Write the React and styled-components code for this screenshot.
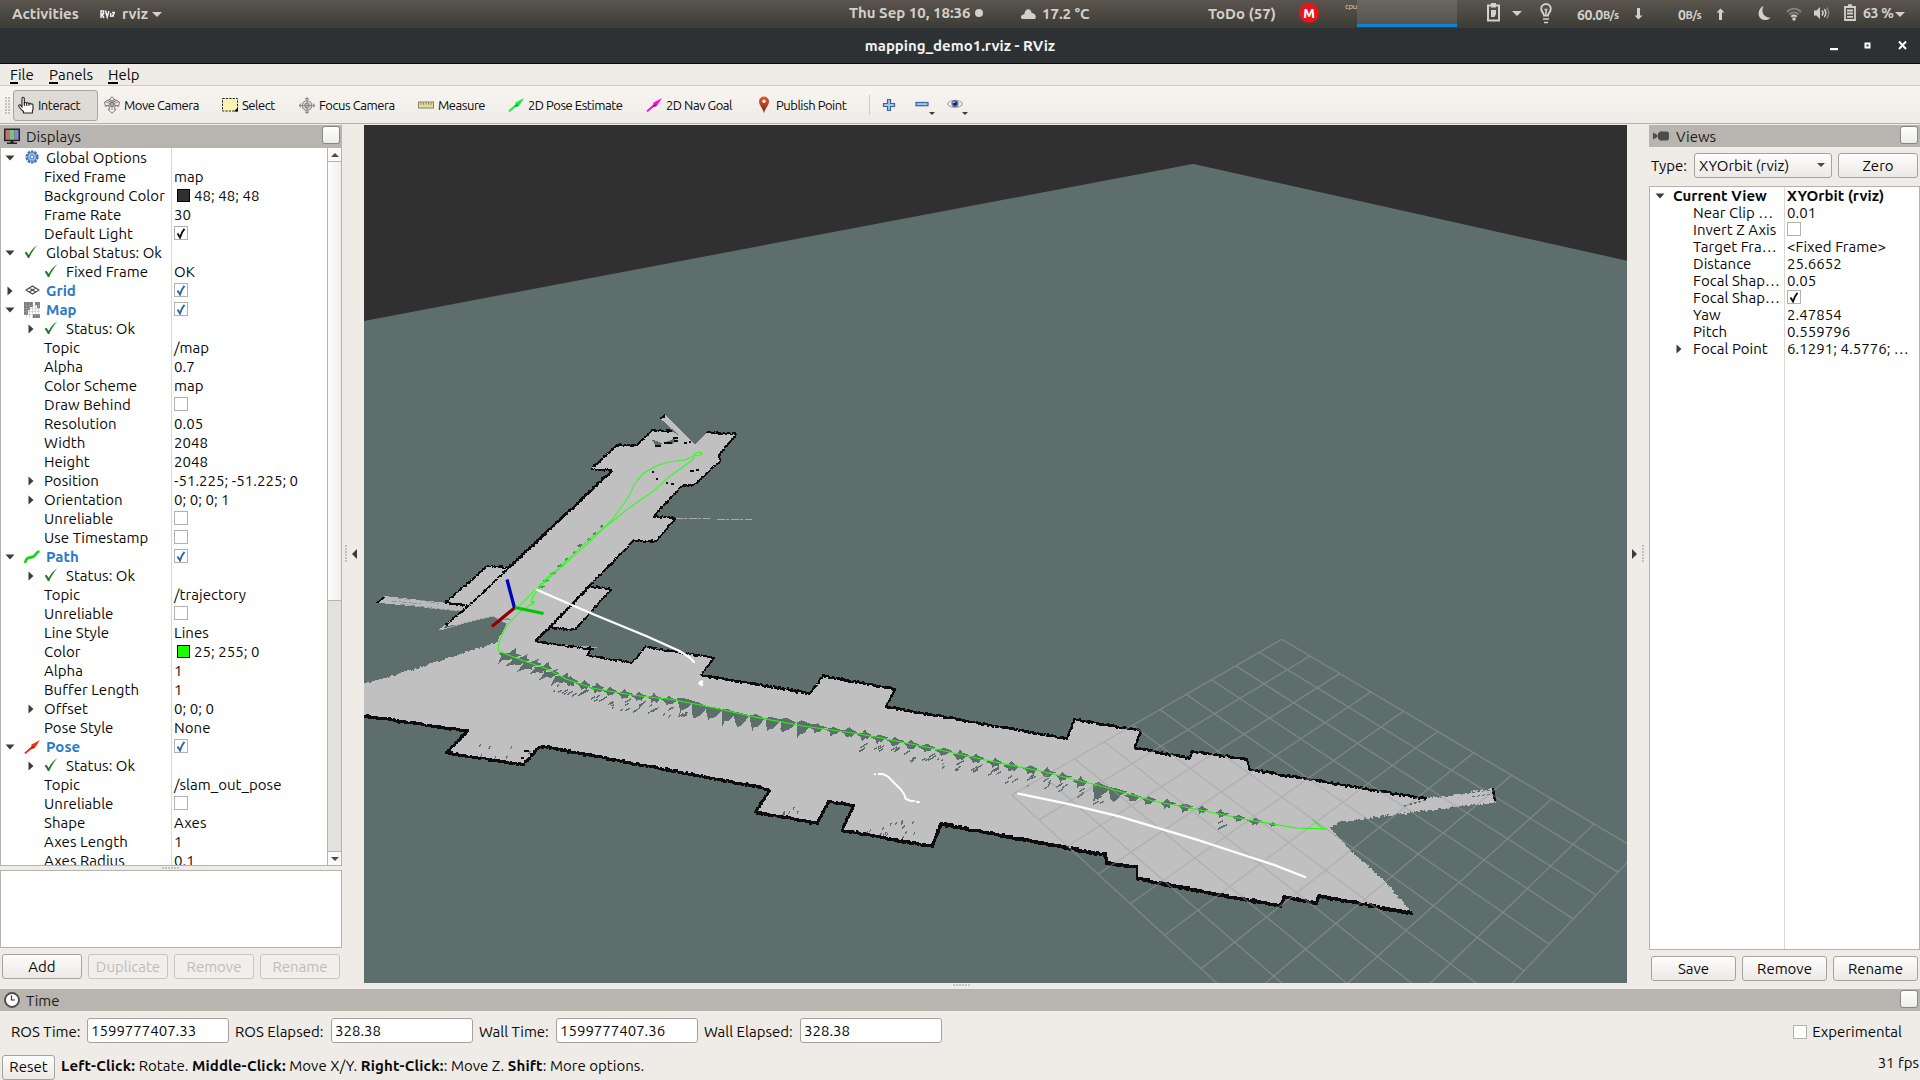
import React from 'react';
import styled, { createGlobalStyle, css } from 'styled-components';

const Global = createGlobalStyle`
  * { box-sizing: border-box; }
  body { margin: 0; background: #efebe7; overflow: hidden; }
  svg { display: block; flex: none; }
`;

const Desktop = styled.div`
  width: 1920px; height: 1080px; display: flex; flex-direction: column;
  background: #efebe7; color: #0a0a0a;
  font: 15px/19px Ubuntu, "Noto Sans", sans-serif; white-space: pre;
`;

/* ---------- desktop bar ---------- */
const TopBar = styled.header`
  height: 28px; padding-left: 12px; display: flex; align-items: center; flex: none;
  background: linear-gradient(#5a564e, #3d3b36); color: #d3d0ca;
  font-weight: 600; font-size: 15px; font-family: Ubuntu, "Open Sans", sans-serif;
`;
const Slot = styled.div`
  width: ${p => p.$w}px; flex: none; display: flex; align-items: center; height: 28px; padding-bottom: ${p => p.$up || 0}px;
  ${p => p.$sm && css`font-size: 14px; letter-spacing: -0.3px; padding-top: 2px; small { font-size: 11px; letter-spacing: -0.2px; padding-top: 1px; }`}
`;
const Dot = styled.i`width: 8px; height: 8px; border-radius: 50%; background: #d3d0ca; margin-top: -2px;`;
const Mega = styled.b`
  width: 20px; height: 20px; border-radius: 50%; background: #e8141b; color: #fff; margin-top: -2px;
  font-size: 13px; line-height: 20px; text-align: center;
`;
const Cpu = styled.span`font-size: 8px; line-height: 10px; font-weight: 400; margin-top: -15px; letter-spacing: -0.3px;`;
const Graph = styled.div`width: 100px; height: 27px; align-self: flex-start; background: linear-gradient(#6a6761, #56544e); border-bottom: 3px solid #0a84d8;`;
const Caret = styled.i`
  width: 0; height: 0; border: ${p => p.$s || 5}px solid transparent; border-bottom: 0;
  border-top: ${p => (p.$s || 5) + 0.5}px solid ${p => p.$c || '#d3d0ca'};
`;

const TitleBar = styled.div`
  height: 36px; flex: none; background: #2d3134; border-bottom: 1.5px solid #08090a; color: #f2f1ef;
  display: grid; grid-template-columns: 1fr auto 1fr; align-items: center;
  font-weight: 700; font-size: 15px;
`;
const WinBtns = styled.div`justify-self: end; padding-right: 9px; display: flex; gap: 18px;`;

/* ---------- menus and tools ---------- */
const MenuBar = styled.nav`
  height: 22px; flex: none; display: flex; padding-left: 10px; align-items: center; border-bottom: 1px solid #cfcbc6;
  u { text-decoration: none; border-bottom: 2px solid #000; line-height: 15px; display: inline-block; }
`;
const MenuItem = styled.span`width: ${p => p.$w}px;`;
const ToolBar = styled.div`
  height: 39px; flex: none; display: flex; align-items: center; padding: 0 0 1px 5px;
  background: linear-gradient(#f8f5f1 0, #efebe6 37px, #b3afaa 37px, #b3afaa 38px, #efebe7 38px);
  font-size: 13px; letter-spacing: -0.46px;
`;
const Tool = styled.div`
  width: ${p => p.$w}px; height: 31px; display: flex; align-items: center; gap: 4px; flex: none;
  ${p => p.$on && css`background: #dedad6; border: 1px solid #a9a5a1; border-radius: 3px; padding-left: 4px; margin: 0 6px 0 3px;`}
`;
const Grip = styled.i`
  width: ${p => p.$w}px; height: ${p => p.$h}px; flex: none;
  background: radial-gradient(circle at 1px 1px, #c4c0bb 0.7px, transparent 1px) 0 0 / 3px 3px;
`;
const ToolSep = styled.i`width: 1px; height: 20px; background: #cdc9c4; margin-right: 11px;`;
const DropTool = styled.div`width: ${p => p.$w}px; display: flex; ${Caret} { margin: 16px 0 0 -1px; }`;

/* ---------- panels ---------- */
const Main = styled.main`display: grid; grid-template-columns: 342px 22px 1263px 22px 271px; height: 864px; flex: none;`;
const Column = styled.section`display: flex; flex-direction: column; min-width: 0;`;
const PanelHead = styled.div`
  height: ${p => p.$h || 22}px; flex: none; background: #b8b4b0; display: flex; align-items: center;
  padding: 0 2px 0 4px; gap: 6px; color: #1b1b1b;
`;
const FloatBtn = styled.button`
  width: 18px; height: 18px; padding: 0; margin: -3px 0 0 auto; background: linear-gradient(#fff, #ececea);
  border: 1px solid #8b8784; border-radius: 3px;
`;
const TreeBox = styled.div`
  height: ${p => p.$h}px; flex: none; display: flex; background: #fff; border: 1px solid #b6b3af;
  border-top-width: ${p => p.$top ?? 1}px; overflow: hidden;
`;
const Rows = styled.div`flex: 1; display: flex; flex-direction: column; overflow: hidden; letter-spacing: 0.04px;`;
const Row = styled.div`display: flex; height: ${p => p.$h}px; flex: none; font-weight: ${p => (p.$bold ? 700 : 400)}; line-height: ${p => p.$h}px;`;
const Name = styled.div`
  width: ${p => p.$w}px; flex: none; display: flex; align-items: center; border-right: 1px solid #d9d9d9; overflow: hidden;
  ${p => p.$blue && css`color: #2a7ac7; font-weight: 700;`}
`;
const Filler = styled.div`flex: 1; width: ${p => p.$w}px; border-right: 1px solid #d9d9d9;`;
const Track = styled.div`flex: 1;`;
const Value = styled.div`display: flex; align-items: center; padding-left: 2px;`;
const Indent = styled.i`width: ${p => p.$w}px; height: 100%; flex: none; display: flex; align-items: center; padding-left: ${p => p.$a}px;`;
const IconCell = styled.i`width: 22px; flex: none; display: flex;`;
const Swatch = styled.i`width: 13px; height: 13px; border: 1px solid #000; background: ${p => p.$c}; margin: 0 4px 0 3px;`;
const Box = styled.i`
  width: 14px; height: 14px; flex: none; background: #fff; border: 1px solid #b4b1ad; display: flex; align-items: center; justify-content: center;
  margin-top: ${p => p.$mt || 0}px;
`;
const ScrollBar = styled.div`width: 14px; border-left: 1px solid #b6b3af; display: flex; flex-direction: column; background: #e3e1de;`;
const ScrollEnd = styled.div`height: 14px; background: #faf9f8; display: flex; align-items: center; justify-content: center; border: solid #b6b3af; border-width: ${p => (p.$up ? '0 0 1px' : '1px 0 0')};`;
const Thumb = styled.div`height: 439px; background: linear-gradient(90deg, #fdfdfc, #f0efed); border-bottom: 1px solid #b6b3af;`;
const UpCaret = styled(Caret)`transform: rotate(180deg);`;
const SplitH = styled.div`height: 4px; flex: none; display: flex; align-items: center; justify-content: center;`;
const HelpBox = styled.div`height: 78px; flex: none; background: #fff; border: 1px solid #b6b3af;`;
const Buttons = styled.div`display: flex; gap: 6px; padding: 6px 2px 0;`;
const Button = styled.button`
  flex: ${p => (p.$w ? 'none' : 1)}; width: ${p => (p.$w ? p.$w + 'px' : 'auto')}; height: 25px; padding: 0; border: 1px solid ${p => (p.disabled ? '#c9c5c1' : '#a6a29e')};
  border-radius: 3px; background: ${p => (p.disabled ? '#f1eeeb' : 'linear-gradient(#fdfdfd, #ebe9e6)')};
  color: ${p => (p.disabled ? '#bfbcb9' : '#0a0a0a')}; font: inherit; line-height: 22px;
`;
const Splitter = styled.div`display: flex; align-items: center; padding-bottom: 7px; gap: 5px; padding-left: ${p => p.$pl}px;`;
const Side = styled.i`
  width: 0; height: 0; border: 5px solid transparent; border-${p => (p.$left ? 'left' : 'right')}: 0;
  border-${p => (p.$left ? 'right' : 'left')}: 5px solid #3c3c3c;
`;
const View = styled.section`display: flex; flex-direction: column; ${Grip} { margin: 1px 0 0 589px; }`;

const TypeRow = styled.div`display: flex; align-items: center; padding: 6px 2px 8px; height: 39px; flex: none;`;
const Combo = styled.div`
  width: 138px; height: 25px; border: 1px solid #a6a29e; border-radius: 3px; background: linear-gradient(#fdfdfd, #ebe9e6);
  display: flex; align-items: center; justify-content: space-between; padding: 0 6px 1px 4px; margin: 0 6px 0 auto;
`;

/* ---------- time panel and status ---------- */
const TimeRow = styled.div`height: 43px; flex: none; display: flex; align-items: center; padding: 0 18px 4px 11px;`;
const Field = styled.label`width: ${p => p.$w}px; display: flex; align-items: center; justify-content: space-between; margin-right: 6px; padding-top: 1px;`;
const Input = styled.span`width: 142px; height: 25px; border: 1px solid #a6a29e; border-radius: 3px; background: #fff; padding-left: 3px; line-height: 23px; margin-top: -1px;`;
const Check = styled.label`margin-left: auto; display: flex; align-items: center; gap: 5px; padding-top: 2px;`;
const Status = styled.footer`height: 26px; flex: none; display: flex; align-items: center; padding-left: 2px; gap: 6px;`;
const Hint = styled.span`margin-top: -3px; letter-spacing: 0.03px; b { letter-spacing: 0.17px; }`;
const Fps = styled.span`margin: -9px 1px 0 auto;`;

/* ---------- icons ---------- */
const Arrow = ({ open }) => (
  <svg width="10" height="10" viewBox="0 0 10 10" fill="#3c3c3c">
    {open ? <path d="M0.5 2.500h9L5 7.500z" /> : <path d="M2.5 .5v9L7.500 5z" />}
  </svg>
);
const Ok = () => (
  <svg width="14" height="15" viewBox="0 0 14 15">
    <path d="M.5 7.800l2-1 2.200 3.200C6.500 6 9.500 2.500 13.300.2 9.800 4 7 8.500 5.200 13H3.800C3 11 2 9.300.5 7.800z" fill="#1d7a22" />
  </svg>
);
const Tick = ({ c }) => (
  <svg width="10" height="11" viewBox="0 0 10 11"><path d="M1.500 5.500l2.500 4C5 6 6.500 3 8.500.8" fill="none" stroke={c} strokeWidth="1.900" /></svg>
);
const CheckBox = ({ v }) => <Box $mt={-1}>{v && <Tick c={v === 'blue' ? '#2a68ad' : '#111'} />}</Box>;

const PoseArrow = ({ c, d }) => (
  <svg width="16" height="16" viewBox="0 0 16 16">
    <path d="M.3 13.800L7.500 7.200l-.3-1.400L16 1l-5.200 7.900-1.500-.2L1.500 15z" fill={c} />
    <path d="M8 7.500l2.800.8-1.600 1.500-2.200-.6z" fill={d} />
  </svg>
);
const icons = {
  gear: (
    <svg width="16" height="16" viewBox="0 0 16 16">
      <circle cx="8" cy="7" r="5.400" fill="#8fb4e0" stroke="#3f72b5" strokeWidth="2.400" strokeDasharray="2.400 1" />
      <circle cx="8" cy="7" r="4.200" fill="#a5c4ea" stroke="#5687c6" />
      <circle cx="8" cy="7" r="1.900" fill="#e8f0fa" stroke="#3f72b5" />
    </svg>
  ),
  ok: <Ok />,
  grid: (
    <svg width="16" height="16" viewBox="0 0 16 16" fill="none" stroke="#4a4a4a" strokeWidth="1.100">
      <path d="M2 7l6.500-4L15 7l-6.500 4zM5.200 5l6.600 4M11.800 5L5.200 9" />
    </svg>
  ),
  map: (
    <svg width="17" height="16" viewBox="0 0 17 16">
      <path d="M0 0h9v5H6v3H4v5H0zM11 0h5v6h-3V3h-2zM9 12h7v4H9z" fill="#7d7d7d" />
      <path d="M2.500 0v16M5.500 0v16M8.500 0v16M11.500 0v16M14.500 0v16M0 3.500h16M0 6.500h16M0 9.500h16M0 12.500h16" stroke="#aaa" strokeWidth=".6" opacity=".7" />
    </svg>
  ),
  path: <svg width="16" height="16" viewBox="0 0 16 16"><path d="M1 14C3 6.500 6 9.500 9.500 7.500 12.500 6 12 2.500 15.500 2.200" fill="none" stroke="#14d214" strokeWidth="2.600" /></svg>,
  pose: <PoseArrow c="#fb2a12" d="#a0190a" />,
};

const Hand = () => (
  <svg width="16" height="18" viewBox="0 0 16 18">
    <path d="M4 11V2.500C4 .8 6.300.8 6.300 2.500V7c.5-.8 2-.8 2.300.3.600-.8 2-.7 2.300.4.500-.7 2-.6 2.200.5.700-.4 1.900-.2 1.900 1V13c0 1-.6 1.500-.6 2.500V17H5.500v-1.500C3.500 13.500 1.500 12.500.7 9.800c0-1.300 1.600-1.300 2.200-.2z" fill="#fff" stroke="#222" strokeWidth="1.100" />
    <path d="M6.400 7v3M8.700 7.500v2.500M11 8v2" stroke="#222" />
  </svg>
);
const MoveCam = () => (
  <svg width="16" height="18" viewBox="0 0 16 18" fill="#f0efed" stroke="#6d6d6d" strokeWidth=".9">
    <path d="M8 .8l2.800 3H9.200V6l2.300-1V3.800L15.500 6l-1 4.500-1.500-1-2.300 1 .0 3h1.300L8 17.200l-4-3.700h1.300v-3L3 9.500l-1.500 1L.5 6l4-2.200V5l2.300 1V3.800H5.200z" />
    <path d="M2 6l12 4M14 6L2 10M8 4v10" strokeWidth=".8" /><circle cx="8" cy="8.500" r="2.200" fill="#aaa" />
  </svg>
);
const SelectIc = () => (
  <svg width="16" height="16" viewBox="0 0 16 16">
    <rect x=".5" y="1.500" width="15" height="12.500" fill="#fbf3b4" stroke="#222" strokeDasharray="2.200 1.200" />
    <path d="M16 10v4.500h-4z" fill="#111" />
  </svg>
);
const Focus = () => (
  <svg width="16" height="17" viewBox="0 0 17 17" fill="none" stroke="#8d8b89" strokeWidth="1.200">
    <circle cx="8.500" cy="8.500" r="5" fill="#e4e2df" /><circle cx="8.500" cy="8.500" r="2.400" />
    <path d="M8.500 0v17M0 8.500h17M6.500 2l2-1.700 2 1.700M6.500 15l2 1.700 2-1.700M2 6.500L.3 8.500 2 10.500M15 6.500l1.700 2-1.700 2" />
  </svg>
);
const Ruler = () => (
  <svg width="16" height="8" viewBox="0 0 16 8">
    <rect x=".5" y="1" width="15" height="6" fill="#e8dc9c" stroke="#84806e" />
    <path d="M3 1.500v2.300M5.500 1.500v2.300M8 1.500v2.300M10.500 1.500v2.300M13 1.500v2.300" stroke="#84806e" />
  </svg>
);
const Pin = () => (
  <svg width="16" height="18" viewBox="0 0 16 18">
    <defs><linearGradient id="pin" x2="0" y2="1"><stop offset="0" stopColor="#ef5430" /><stop offset="1" stopColor="#6a2e12" /></linearGradient></defs>
    <path d="M8 17.500C7.400 13 3 9.500 3 5.500a5 5 0 0110 0c0 4-4.400 7.500-5 12z" fill="url(#pin)" /><circle cx="8" cy="5.300" r="1.700" fill="#fbe9e3" />
  </svg>
);
const Plus = () => (
  <svg width="16" height="16" viewBox="0 0 16 16"><path d="M6.500 2.500h3v4h4v3h-4v4h-3v-4h-4v-3h4z" fill="#a7c3e8" stroke="#3465a4" strokeWidth="1.200" /></svg>
);
const Minus = () => (
  <svg width="16" height="16" viewBox="0 0 16 16"><rect x="2" y="6.500" width="12" height="3.200" fill="#a7c3e8" stroke="#3465a4" strokeWidth="1.200" /></svg>
);
const Eye = () => (
  <svg width="16" height="16" viewBox="0 0 16 16">
    <path d="M.5 8C3 3 13 3 15.500 8 13 12.500 3 12.500.5 8z" fill="#f4f4f4" stroke="#aaa" strokeWidth="1.200" />
    <circle cx="8" cy="7.600" r="3.700" fill="#5b74b8" /><circle cx="8" cy="7.600" r="1.900" fill="#141a30" /><circle cx="7" cy="6.500" r=".8" fill="#fff" />
  </svg>
);
const Monitor = () => (
  <svg width="16" height="17" viewBox="0 0 16 17">
    <rect x=".7" y="1.200" width="14.600" height="11.300" fill="#333" stroke="#222" strokeWidth="1.400" />
    <path d="M1.500 2H6v9.700H1.500z" fill="#c67070" /><path d="M6 2h4.500v9.700H6z" fill="#7cc080" /><path d="M10.500 2h4v9.700h-4z" fill="#8a86d0" />
    <path d="M6.500 12.500h3v2h3.500v1.500H3v-1.500h3.500z" fill="#222" />
  </svg>
);
const Camera = () => (
  <svg width="17" height="10" viewBox="0 0 17 10" fill="#4c4c4c"><path d="M0 1.500L4.500 4v2L0 8.500zM5 2.500L7 .5h7.500L16 2v6l-1.500 1.500H7L5 7.500z" /></svg>
);
const Clock = () => (
  <svg width="16" height="16" viewBox="0 0 16 16"><circle cx="8" cy="8" r="7" fill="#fff" stroke="#4e4e4e" strokeWidth="1.900" /><path d="M7.500 3.500V8H11" fill="none" stroke="#333" strokeWidth="1.200" /></svg>
);
const RvizLogo = () => (
  <svg width="15" height="11" viewBox="0 0 15 11" fill="none" stroke="#f0f0f0" strokeWidth="1.500">
    <path d="M1 9V2h2.500v3H1.500L4 9M5.500 1.500L7.200 8 9 2M10.700 4v4M12 3.500h2.500L12.500 7H14" />
  </svg>
);
const g = '#d3d0ca';
const Cloud = () => <svg width="16" height="10" viewBox="0 0 16 10" fill={g}><path d="M2 10a2.500 2.500 0 010-4c.8-.6 1.500-.5 2.300-.4C4.500-.8 11-1.200 11.500 3.700 15 4 17 8 15 10z" /></svg>;
const Clip = () => (
  <svg width="14" height="19" viewBox="0 0 14 19" fill="none" stroke={g} strokeWidth="2"><path d="M4 2.500H1V17.500h11V2.500H9" /><path d="M4 0h5v4.500H4zM4 7h5v4l-1.500 3H4z" fill={g} stroke="none" /></svg>
);
const Bulb = () => (
  <svg width="12" height="21" viewBox="0 0 12 21" fill="none" stroke={g} strokeWidth="1.900"><path d="M4 12.500C4 10 1.200 9 1.200 5.800a4.800 4.800 0 019.600 0C10.800 9 8 10 8 12.500z" /><path d="M3 16h6M4 19.500h4M6 6.500v5M4.500 6.500h3" strokeWidth="1.500" /></svg>
);
const UD = ({ up }) => (
  <svg width="9" height="12" viewBox="0 0 9 12" fill={g}>
    {up ? <path d="M3 12h3V4.500h2.500l-4-4-4 4H3z" /> : <path d="M3 0h3v7.500h2.500l-4 4-4-4H3z" />}
  </svg>
);
const Moon = () => <svg width="13" height="14" viewBox="0 0 13 14" fill={g}><path d="M5.500 0C-1.500 3-1 14 7 14c2 0 4-.8 5.500-2.300C6 12 2.500 6 5.500 0z" /></svg>;
const Wifi = () => (
  <svg width="16" height="14" viewBox="0 0 16 14" fill="none" strokeWidth="1.900"><path d="M1 5C5 .5 11 .5 15 5" stroke="#85827c" /><path d="M3.300 7.500c3-3 6.500-3 9.400 0" stroke="#85827c" /><path d="M5.300 9.700c1.800-1.600 3.600-1.600 5.400 0" stroke={g} /><circle cx="8" cy="12" r="1.700" fill={g} /></svg>
);
const Vol = () => (
  <svg width="16" height="14" viewBox="0 0 16 14" fill="none" stroke={g} strokeWidth="1.500"><path d="M0 4.500h2.500L6 1v12L2.500 9.500H0z" fill={g} stroke="none" /><path d="M8 4.500q2 2.500 0 5M10.300 3q3 4 0 8" /><path d="M12.700 1.500q4 5.500 0 11" stroke="#85827c" /></svg>
);
const Batt = () => (
  <svg width="12" height="17" viewBox="0 0 12 17" fill="none" stroke={g} strokeWidth="1.800"><path d="M1 3h10v13H1zM4 1.200h4M3 6.500h6M3 9.500h6M3 12.800h6" /></svg>
);

/* ---------- 3D scene ---------- */
/* survey sections are stored in thirds of a pixel from the section's own origin */
const sec = (ox, oy, s) => s.trim().split(/\s+/).map(p => { const [x, y] = p.split(','); return [ox + x / 3, oy + y / 3]; });
const rng = seed => () => { seed = (seed * 16807) % 2147483647; return seed / 2147483647; };
const poly = pts => 'M' + pts.map(p => p[0].toFixed(1) + ' ' + p[1].toFixed(1)).join('L');

const north = sec(360, 400, `12,853 150,815 260,778 413,730 418,705 440,672 400,648 235,690 255,675 325,618 255,608 380,498 445,503 755,212 693,206 770,135 830,135 875,90 935,93 962,110 900,55 915,45 1005,133 1040,97 1128,103 1076,165 1080,182 1000,256 965,257 880,348 945,354 888,424 820,422 687,558 752,568 643,690 568,683 525,723 690,748 680,766 815,788 855,741 1062,773 1022,825`);
const east = [...sec(360, 620, `1022,165 1350,220 1388,168`), ...sec(820, 650, `10,78 225,117 197,170 740,266 762,208 962,242 943,293 1108,325 1115,303`)];
const tip = sec(1180, 620, `35,393 200,418 208,448 740,537 800,531 938,508 945,543 670,577 480,603 445,622 500,685 610,785 693,880 415,828 408,850 312,830 300,858 0,802`);
const south = [...sec(820, 650, `950,685 950,652 860,640 855,615 362,522 335,590 65,540 100,467 25,455`), ...sec(360, 620, `1405,545 1370,610 1185,577 1228,510 1180,498 540,378 487,435 258,398 322,333 12,288`)];
const floor = poly([...north, ...east, ...tip, ...south]) + 'Z';

/* scatters small cells along a polyline, as an occupancy grid does */
const rough = (lines, seed, amp) => lines.map(([t, pts], k) => {
  const r = rng(seed + k * 37);
  let d = '';
  for (let i = 1; i < pts.length; i++) {
    const [x0, y0] = pts[i - 1], [x1, y1] = pts[i];
    const n = Math.ceil(Math.hypot(x1 - x0, y1 - y0) / 1.1);
    for (let j = 0; j < n; j++) {
      const h = t + r() * 1.6;
      d += `M${(x0 + (x1 - x0) * j / n - t / 2).toFixed(1)} ${(y0 + (y1 - y0) * j / n - h / 2 + (r() - .5) * amp).toFixed(1)}h${(t + .6).toFixed(1)}v${h.toFixed(1)}h-${(t + .6).toFixed(1)}z`;
    }
  }
  return d;
}).join('');
const wallPath = rough([
  [.8, sec(360, 400, `255,675 325,618 445,503`)], [1.6, sec(360, 400, `445,503 755,212`)],
  [1, sec(360, 400, `325,618 255,608 380,498 445,503`)], [1, sec(360, 400, `755,212 693,206 770,135 830,135 875,90 935,93`)],
  [1, sec(360, 400, `1040,97 1128,103 1076,165 1080,182 1000,256 965,257 880,348 945,354 888,424 820,422 687,558 752,568 643,690 568,683 525,723 690,748 680,766 815,788 855,741 1062,773 1022,825`)],
  [1.4, sec(360, 400, `687,558 565,685 525,723`)], [1.1, sec(360, 400, `900,55 915,45`)], [1, sec(360, 400, `50,608 75,590`)],
  [1.4, east], [1.4, tip.slice(0, 4)], [1.8, tip.slice(5, 7)], [2.2, [...tip.slice(12), ...south.slice(0, 6)]], [1.8, south.slice(5)],
], 991, 1.8);
const edgePath = rough([[1, north.slice(0, 4)], [1, tip.slice(3, 6)], [1, tip.slice(6, 13)]], 313, 2.4);

const trail = [...sec(360, 400, `415,753 490,782 560,806 620,838 700,865 820,886 930,898`), ...sec(360, 620, `1040,259 1180,290 1330,318 1500,342`), ...sec(820, 650, `170,262 330,293 500,331 660,363 830,405 1000,453 1140,480 1290,511 1390,527 1430,534 1500,536`), ...sec(1180, 620, `440,627`)];

/* laser shadows beside the trail: [x, y] centre, drawn as irregular wedges */
const SLANT = [[-11, 7], [-6, 0], [-7, -2], [2, -2], [9, -6], [8, -2], [13, 0], [4, 3], [2, 5], [-3, 4]];
const WEDGE = [[-9, -2], [-3, -3], [0, -6], [3, -3], [9, -1], [5, 1], [3, 4], [0, 3], [-3, 5], [-4, 1]];
const DEEP = [[-6, -5], [0, -6], [9, -3], [12, -2], [7, 2], [3, 6], [-2, 9], [-4, 11], [-5, 5]];
const tufts = sec(360, 620, `440,106 475,120 508,132 540,146 568,160 600,175 632,187 672,197 712,206 750,216 793,225 838,231 882,236 928,243 970,250 1012,265 1055,274 1098,284 1140,292 1187,300 1232,306 1278,313 1325,319 1372,325 1420,333 1468,338`)
  .concat(sec(820, 650, `88,249 135,258 178,267 225,276 273,286 322,295 370,306 420,318 468,327 525,340 575,352 632,360 682,370 728,382 782,398 835,418 885,430 938,442 985,452 1040,463 1095,473 1145,481 1203,493 1255,505 1305,516 1358,524`));
const tuftPath = (() => {
  const r = rng(4242);
  return tufts.map(([x, y], i) => {
    const shape = i < 6 ? SLANT : (i > 13 && i < 23) || i === 41 || i === 42 ? DEEP : WEDGE;
    const k = i > 50 ? .5 : i > 46 ? .8 : i < 6 ? 1 : i === 41 ? 1.1 : .95;
    const j = a => a * k * (.75 + r() * .45);
    let d = poly(shape.map(([a, b]) => [x + j(a), y + j(b)])) + 'Z';
    if ((i > 4 && i < 15) || (i > 26 && i < 42) || i === 48) {
      for (let n = 0; n < 4; n++) {
        const a = x - 7 + r() * 9, b = y + 7 + r() * 9, w = 2 + r() * 6;
        d += `M${a.toFixed(1)} ${b.toFixed(1)}l${w.toFixed(1)} -${(w * .6).toFixed(1)}v1.500l-${w.toFixed(1)} ${(w * .6).toFixed(1)}z`;
      }
    }
    return d;
  }).join('');
})();
const northTufts = (() => {
  const r = rng(19);
  return sec(360, 400, `725,380 705,403 686,420 660,438 643,460 620,480 600,499 580,521 557,543 545,562`).map(([x, y]) => {
    const w = 2 + r() * 2;
    return `M${(x - w).toFixed(1)} ${y.toFixed(1)}l${w.toFixed(1)}-2 ${w.toFixed(1)} 1-${w.toFixed(1)} 2z`;
  }).join('');
})();
const specks = (() => {
  const r = rng(77);
  let d = '';
  [[480, 742, 50, 14, 7], [780, 806, 26, 8, 6], [880, 820, 34, 20, 20], [864, 826, 6, 5, 2]].forEach(([x, y, w, h, n]) => {
    for (let i = 0; i < n; i++) d += `M${(x + r() * w).toFixed(1)} ${(y + r() * h).toFixed(1)}h1.500l-1.500 3h-1z`;
  });
  return d;
})();

const cell = (u, v) => { const k = 1 - 0.02239 * u - 0.01794 * v; return [(1281.7 - 0.99 * u - 45.15 * v) / k, (639.3 + 2.06 * u + 1.31 * v) / k]; };
const gridPath = Array.from({ length: 11 }, (_, i) => poly([cell(i, 0), cell(i, 10)]) + poly([cell(0, i), cell(10, i)])).join('');

const Scene = () => (
  <svg width="1263" height="858" viewBox="364 125 1263 858">
    <rect x="364" y="125" width="1263" height="858" fill="#303030" />
    <path d="M364 321L1190 164.500L1194 164L1198 165L1627 260.700V983H364z" fill="#5e6e6c" />
    <g shapeRendering="crispEdges">
      <path d={floor} fill="#c0c0c0" /><path d={edgePath} fill="#c0c0c0" />
      <path d={poly(sec(360, 400, '50,608 75,588 255,608 330,618 300,634 150,618')) + 'Z'} fill="#b9bbbb" />
      <path d="M392 601l30 3M400 604l40 5M420 600l20 4M430 608l30 3M398 598l12 2" stroke="#8c9695" strokeWidth="1" strokeDasharray="5 2 2 1" />
      <path d="M545 644l38 2 15 1-6 2-20-1z" fill="#a9adac" />
      <path d={poly(sec(360, 400, '877,121 890,122 905,130 900,136 885,135')) + 'Z' + poly(sec(360, 400, '920,125 950,113 945,120 938,132 915,132')) + 'Z'} fill="#5e6e6c" />
      <path d="M675 518.500h35M717 519.500h35" stroke="#a5abab" strokeDasharray="8 1 3 2" />
      <path d={poly(sec(360, 400, '255,679 320,670 400,652 440,672 425,700 405,722 235,722')) + 'Z'} fill="#5e6e6c" />
      <path d={poly(sec(360, 400, '400,650 440,672 420,660 445,658 430,650 452,660'))} fill="none" stroke="#84908e" />
      <path d={poly(sec(360, 400, '237,690 255,686 330,664 400,648'))} fill="none" stroke="#a9adac" />
      <path d={tuftPath} fill="#5e6e6c" /><path d={northTufts + specks} fill="#5e6e6c" />
      <path d="M1404 806l22-6" stroke="#5e6e6c" strokeWidth="1.500" strokeDasharray="3 2" />
      <path d="M1462 794l28-4M1472 797l18-3" stroke="#5e6e6c" strokeDasharray="3 2" />
      <path d={wallPath} fill="#0d0d0d" />
      <path d="M652 472h2M656 479h2M666 483h2M671 484h3M690 471h4M696 470h3M655 446h6M664 443h8M678 438h-5M674 441h4M684 443h3M689 442h2M524 751h5M521 758h3M586 649h8M590 646v4" stroke="#0d0d0d" strokeWidth="1.600" fill="none" />
    </g>
    <path d={gridPath} fill="none" stroke="rgba(160,160,164,.5)" strokeWidth="1.300" />
    <g fill="none" stroke="#19ff00" strokeLinejoin="round" strokeWidth="1.150">
      <path d={poly(trail)} />
      <g stroke="#2dff1a" strokeWidth="1.050">
        <path d={poly(sec(360, 400, '415,753 415,735 425,705 445,672 480,635 520,608 512,604 525,606 515,614 518,590 555,545 600,505 690,425 760,355 805,292 825,250 850,220 890,197 930,185 975,180 1000,168'))} />
        <path d={poly(sec(360, 400, '470,625 560,535 640,463 690,415 740,378 810,322 880,274 925,232 970,200 1000,178 1005,160 1020,156 1028,162 1015,167 1000,166'))} />
      </g>
      <path d={poly(sec(1180, 620, '398,600 430,627'))} />
    </g>
    <g fill="none" stroke="#fff" strokeWidth="2.300" strokeLinecap="round">
      <path d={poly(sec(360, 400, '530,569 700,643 860,709 960,754 990,773 1002,786'))} />
      <path d={poly(sec(360, 400, '1025,845 1020,850 1025,854'))} strokeWidth="3" />
      <path d={poly(sec(820, 650, '164,373 165,373')) + poly(sec(820, 650, '176,372 190,373 205,380 222,398 240,416 252,432 257,446 270,452 282,453')) + poly(sec(820, 650, '290,455 297,457'))} strokeWidth="2" />
      <path d={poly(sec(820, 650, '595,431 740,461 900,500 1020,536 1130,569 1280,618 1360,644 1455,681'))} />
    </g>
    <g strokeWidth="3.200" fill="none">
      <path d="M515 607.500L492 626.500" stroke="#900000" /><path d="M514.500 608L507 579.500" stroke="#0000bb" /><path d="M515 607.500L543.500 613.500" stroke="#00c800" />
    </g>
  </svg>
);

/* ---------- data ---------- */
/* kind: top / blue = panel-level item, st = status row, p = property */
const displays = [
  ['top', 'Global Options', null, 'gear'], ['p', 'Fixed Frame', 'map'], ['p', 'Background Color', '48; 48; 48', '#303030'],
  ['p', 'Frame Rate', '30'], ['p', 'Default Light', 'dark'], ['top', 'Global Status: Ok', null, 'ok'], ['st', 'Fixed Frame', 'OK', null, false],
  ['blue', 'Grid', 'blue', 'grid', true], ['blue', 'Map', 'blue', 'map'], ['st', 'Status: Ok', null, null, true],
  ['p', 'Topic', '/map'], ['p', 'Alpha', '0.7'], ['p', 'Color Scheme', 'map'], ['p', 'Draw Behind', 'off'], ['p', 'Resolution', '0.05'],
  ['p', 'Width', '2048'], ['p', 'Height', '2048'], ['p', 'Position', '-51.225; -51.225; 0', null, true], ['p', 'Orientation', '0; 0; 0; 1', null, true],
  ['p', 'Unreliable', 'off'], ['p', 'Use Timestamp', 'off'], ['blue', 'Path', 'blue', 'path'], ['st', 'Status: Ok', null, null, true],
  ['p', 'Topic', '/trajectory'], ['p', 'Unreliable', 'off'], ['p', 'Line Style', 'Lines'], ['p', 'Color', '25; 255; 0', '#19ff00'],
  ['p', 'Alpha', '1'], ['p', 'Buffer Length', '1'], ['p', 'Offset', '0; 0; 0', null, true], ['p', 'Pose Style', 'None'],
  ['blue', 'Pose', 'blue', 'pose'], ['st', 'Status: Ok', null, null, true], ['p', 'Topic', '/slam_out_pose'], ['p', 'Unreliable', 'off'],
  ['p', 'Shape', 'Axes'], ['p', 'Axes Length', '1'], ['p', 'Axes Radius', '0.1'],
];
const views = [
  ['Near Clip …', '0.01'], ['Invert Z Axis', 'off'], ['Target Fra…', '<Fixed Frame>'], ['Distance', '25.6652'], ['Focal Shap…', '0.05'],
  ['Focal Shap…', 'dark'], ['Yaw', '2.47854'], ['Pitch', '0.559796'], ['Focal Point', '6.1291; 4.5776; …', true],
];
const isBox = v => v === 'off' || v === 'dark' || v === 'blue';
const cellValue = v => (isBox(v) ? <CheckBox v={v === 'off' ? null : v} /> : v);

const DisplayRow = ({ item: [kind, name, val, extra, arrow] }) => {
  const head = kind === 'top' || kind === 'blue';
  return (
    <Row $h={19}>
      <Name $w={171} $blue={kind === 'blue'}>
        <Indent $w={head ? 23 : 43} $a={head ? 4 : 24.5}>{head ? <Arrow open={!arrow} /> : arrow && <Arrow />}</Indent>
        {head && <IconCell>{icons[extra]}</IconCell>}
        {kind === 'st' && <IconCell><Ok /></IconCell>}
        {name}
      </Name>
      <Value>{extra && kind === 'p' && <Swatch $c={extra} />}{cellValue(val)}</Value>
    </Row>
  );
};

export default function App() {
  return (
    <Desktop>
      <Global />
      <TopBar>
        <Slot $w={88} $up={1}>Activities</Slot><Slot $w={22}><RvizLogo /></Slot><Slot $w={30} $up={1}>rviz</Slot><Slot $w={697}><Caret /></Slot>
        <Slot $w={126} $up={3}>Thu Sep 10, 18:36</Slot><Slot $w={45}><Dot /></Slot><Slot $w={22} $up={1}><Cloud /></Slot><Slot $w={166} $up={1}>17.2 °C</Slot>
        <Slot $w={91} $up={1}>ToDo (57)</Slot><Slot $w={46}><Mega>M</Mega></Slot><Slot $w={12}><Cpu>cpu</Cpu></Slot><Slot $w={130}><Graph /></Slot>
        <Slot $w={25} $up={3}><Clip /></Slot><Slot $w={28} $up={1}><Caret /></Slot><Slot $w={37} $up={2}><Bulb /></Slot>
        <Slot $w={57} $sm>60.0<small>B/s</small></Slot><Slot $w={44}><UD /></Slot><Slot $w={38} $sm>0<small>B/s</small></Slot><Slot $w={42}><UD up /></Slot>
        <Slot $w={28} $up={2}><Moon /></Slot><Slot $w={28}><Wifi /></Slot><Slot $w={30} $up={2}><Vol /></Slot><Slot $w={19} $up={3}><Batt /></Slot>
        <Slot $w={32} $sm $up={3}>63 %</Slot><Caret />
      </TopBar>
      <TitleBar>
        <span /><span>mapping_demo1.rviz - RViz</span>
        <WinBtns>
          <svg width="16" height="12" viewBox="0 0 16 12" fill="#fff"><path d="M3 8h8v2.200H3z" /></svg>
          <svg width="16" height="12" viewBox="0 0 16 12"><path d="M4.500 3.500h4v4h-4z" fill="none" stroke="#fff" strokeWidth="2" /></svg>
          <svg width="16" height="12" viewBox="0 0 16 12"><path d="M4 1.500l7 7.500M11 1.500L4 9" stroke="#fff" strokeWidth="1.900" /></svg>
        </WinBtns>
      </TitleBar>
      <MenuBar>
        <MenuItem $w={39}><u>F</u>ile</MenuItem><MenuItem $w={59}><u>P</u>anels</MenuItem><MenuItem $w={50}><u>H</u>elp</MenuItem>
      </MenuBar>
      <ToolBar>
        <Grip $w={5} $h={17} />
        <Tool $w={85} $on><Hand />Interact</Tool>
        <Tool $w={118}><MoveCam />Move Camera</Tool>
        <Tool $w={77}><SelectIc />Select</Tool>
        <Tool $w={119}><Focus />Focus Camera</Tool>
        <Tool $w={90}><Ruler />Measure</Tool>
        <Tool $w={138}><PoseArrow c="#0ff03a" d="#0a9a20" />2D Pose Estimate</Tool>
        <Tool $w={110}><PoseArrow c="#f80fe0" d="#8e0a80" />2D Nav Goal</Tool>
        <Tool $w={113}><Pin />Publish Point</Tool>
        <ToolSep />
        <DropTool $w={33}><Plus /></DropTool>
        <DropTool $w={33}><Minus /><Caret $s={3} $c="#3c3c3c" /></DropTool>
        <DropTool $w={33}><Eye /><Caret $s={3} $c="#3c3c3c" /></DropTool>
      </ToolBar>
      <Main>
        <Column>
          <PanelHead $h={23}><Monitor />Displays<FloatBtn /></PanelHead>
          <TreeBox $h={718} $top={0}>
            <Rows>{displays.map((d, i) => <DisplayRow key={i} item={d} />)}</Rows>
            <ScrollBar>
              <ScrollEnd $up><UpCaret $s={4} $c="#4a4a4a" /></ScrollEnd>
              <Thumb /><Track />
              <ScrollEnd><Caret $s={4} $c="#4a4a4a" /></ScrollEnd>
            </ScrollBar>
          </TreeBox>
          <SplitH><Grip $w={18} $h={2} /></SplitH>
          <HelpBox />
          <Buttons><Button>Add</Button><Button disabled>Duplicate</Button><Button disabled>Remove</Button><Button disabled>Rename</Button></Buttons>
        </Column>
        <Splitter $pl={3}><Grip $w={2} $h={17} /><Side $left /></Splitter>
        <View><Scene /><Grip $w={18} $h={2} /></View>
        <Splitter $pl={5}><Side /><Grip $w={2} $h={17} /></Splitter>
        <Column>
          <PanelHead><Camera />Views<FloatBtn /></PanelHead>
          <TypeRow>Type:<Combo>XYOrbit (rviz)<Caret $s={4} $c="#4a4a4a" /></Combo><Button $w={80}>Zero</Button></TypeRow>
          <TreeBox $h={764}>
            <Rows>
              <Row $h={17} $bold><Name $w={135}><Indent $w={23} $a={4.5}><Arrow open /></Indent>Current View</Name><Value>XYOrbit (rviz)</Value></Row>
              {views.map(([n, v, a], i) => (
                <Row key={i} $h={17}>
                  <Name $w={135}><Indent $w={43} $a={24}>{a && <Arrow />}</Indent>{n}</Name>
                  <Value>{cellValue(v)}</Value>
                </Row>
              ))}
              <Filler $w={135} />
            </Rows>
          </TreeBox>
          <Buttons><Button>Save</Button><Button>Remove</Button><Button>Rename</Button></Buttons>
        </Column>
      </Main>
      <PanelHead><Clock />Time<FloatBtn /></PanelHead>
      <TimeRow>
        <Field $w={218}>ROS Time:<Input>1599777407.33</Input></Field>
        <Field $w={238}>ROS Elapsed:<Input>328.38</Input></Field>
        <Field $w={219}>Wall Time:<Input>1599777407.36</Input></Field>
        <Field $w={238}>Wall Elapsed:<Input>328.38</Input></Field>
        <Check><Box />Experimental</Check>
      </TimeRow>
      <Status>
        <Button $w={53}>Reset</Button>
        <Hint><b>Left-Click:</b> Rotate. <b>Middle-Click:</b> Move X/Y. <b>Right-Click:</b>: Move Z. <b>Shift</b>: More options.</Hint>
        <Fps>31 fps</Fps>
      </Status>
    </Desktop>
  );
}
